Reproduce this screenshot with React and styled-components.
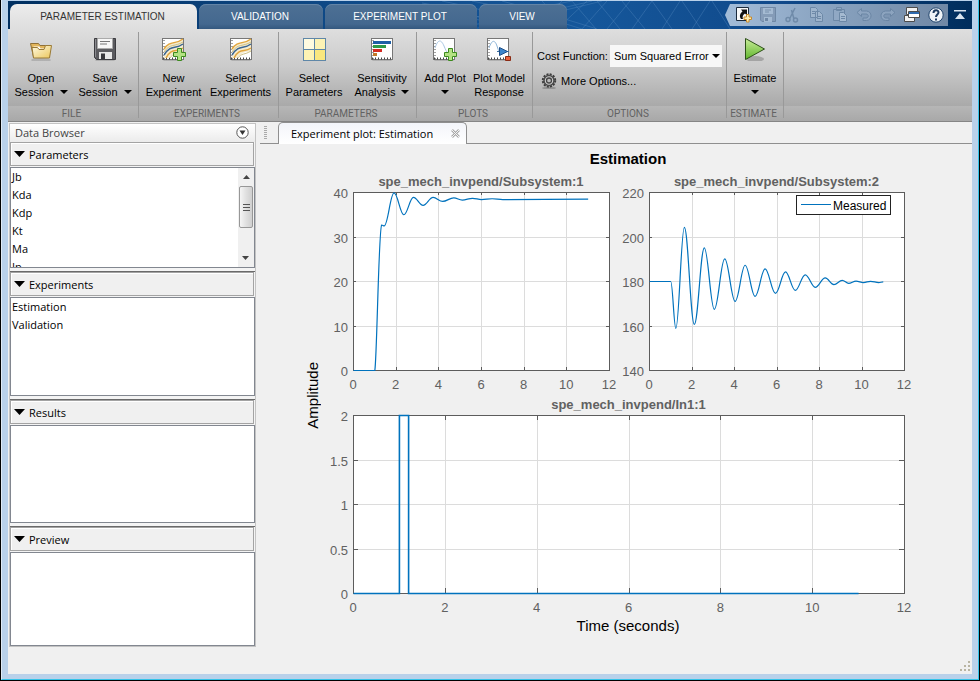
import React from "react";
import styled, { createGlobalStyle } from "styled-components";

const GlobalStyle = createGlobalStyle`
  * {
    box-sizing: border-box;
  }
  body {
    margin: 0;
    background: #000;
    font-family: "Liberation Sans", Arial, sans-serif;
    font-size: 11px;
    color: #000;
  }
  button {
    margin: 0;
    padding: 0;
    border: 0;
    background: none;
    font: inherit;
    color: inherit;
  }
  svg {
    display: block;
  }
`;

//data
const angleCurve = [
  [1, 180],
  [1.24, 158.9],
  [1.64, 204.3],
  [2.11, 160.7],
  [2.58, 195.1],
  [3.05, 167.5],
  [3.54, 190.2],
  [4.03, 171.1],
  [4.5, 187.3],
  [4.97, 173.3],
  [5.44, 185.7],
  [5.93, 174.7],
  [6.4, 184.3],
  [6.86, 176],
  [7.33, 183],
  [7.8, 177.4],
  [8.27, 181.6],
  [8.68, 178.6],
  [9.07, 180.5],
  [9.37, 179.2],
  [9.72, 180.2],
  [10.07, 179.5],
  [10.4, 180.1],
  [10.79, 179.5],
  [11, 179.8],
];

const positionCurve = [
  [1.32, 32.7],
  [1.44, 32.5],
  [1.9, 39.9],
  [2.36, 35],
  [2.81, 38.9],
  [3.26, 37.1],
  [3.73, 38.9],
  [4.18, 38],
  [4.7, 38.8],
  [5.1, 38.3],
  [5.58, 38.7],
  [6, 38.4],
  [6.5, 38.6],
  [7, 38.4],
  [11, 38.5],
];

const steps = (min, max, step) => {
  const out = [];
  for (let v = min; v <= max + step / 10; v += step) out.push(v);
  return out;
};

//chart
const Chart = ({ title, width, right, min, max, step, tick, legend, stroke = 1.2, draw }) => {
  const left = 28;
  const top = 20;
  const bottom = 198;
  const x = (v) => left + ((right - left) * v) / 12;
  const y = (v) => bottom - ((bottom - top) * (v - min)) / (max - min);
  const px = (v) => Math.round(v) + 0.5;
  const xs = steps(0, 12, 2);
  const ys = steps(min, max, step);

  return (
    <StyledChart viewBox={`0 0 ${width} 223`} role="img" aria-label={title}>
      <rect x={left} y={top} width={right - left} height={bottom - top} fill="#fff" />
      <g stroke="#dcdcdc">
        {xs.map((v) => (
          <line key={v} x1={px(x(v))} x2={px(x(v))} y1={top} y2={bottom} />
        ))}
        {ys.map((v) => (
          <line key={v} x1={left} x2={right} y1={px(y(v))} y2={px(y(v))} />
        ))}
      </g>
      <g stroke="#5c5c5c" fill="none">
        {xs.map((v) => (
          <path
            key={v}
            d={`M${px(x(v))} ${top}v${tick}M${px(x(v))} ${bottom}v-${tick}`}
          />
        ))}
        {ys.map((v) => (
          <path
            key={v}
            d={`M${left} ${px(y(v))}h${tick}M${right} ${px(y(v))}h-${tick}`}
          />
        ))}
        <rect
          x={left + 0.5}
          y={top + 0.5}
          width={right - left}
          height={bottom - top}
        />
      </g>
      <path
        d={draw(x, y)}
        fill="none"
        stroke="#0072bd"
        strokeWidth={stroke}
        transform="translate(0.5 0.5)"
      />
      <ChartTitle x={(left + right) / 2} y="14">
        {title}
      </ChartTitle>
      {xs.map((v) => (
        <TickLabel key={v} x={x(v)} y="217" textAnchor="middle">
          {v}
        </TickLabel>
      ))}
      {ys.map((v) => (
        <TickLabel key={v} x={left - 5} y={Math.round(y(v)) + 6} textAnchor="end">
          {v}
        </TickLabel>
      ))}
      {legend && (
        <g>
          <rect x="175.5" y="23.5" width="94" height="19" fill="#fff" stroke="#222" />
          <path d="M180 32.5h30" stroke="#0072bd" />
          <LegendText x="212" y="38">
            {legend}
          </LegendText>
        </g>
      )}
    </StyledChart>
  );
};

const smooth = (points, x, y) => {
  let d = "";
  for (let i = 1; i < points.length; i++) {
    const [t0, v0] = points[i - 1];
    const [t1, v1] = points[i];
    const pull = (t1 - t0) * 0.38;
    d += `C${x(t0 + pull)} ${y(v0)} ${x(t1 - pull)} ${y(v1)} ${x(t1)} ${y(v1)}`;
  }
  return d;
};

const drawPosition = (x, y) =>
  `M${x(0)} ${y(0)}H${x(1)}C${x(1.1)} ${y(3)} ${x(1.18)} ${y(32)} ${x(1.32)} ${y(
    32.7
  )}${smooth(positionCurve, x, y)}`;

const drawAngle = (x, y) =>
  `M${x(0)} ${y(180)}H${x(1)}${smooth(angleCurve, x, y)}`;

const drawPulse = (x, y) =>
  `M${x(0)} ${y(0)}H${x(1)}V${y(2)}H${x(1.2)}V${y(0)}H${x(11)}`;

const StyledChart = styled.svg`
  width: 100%;
  height: auto;
  overflow: visible;
`;

const ChartTitle = styled.text`
  font-size: 13px;
  font-weight: bold;
  fill: #616161;
  text-anchor: middle;
`;

const TickLabel = styled.text`
  font-size: 13px;
  fill: #616161;
`;

const LegendText = styled.text`
  font-size: 12px;
  fill: #000;
`;

//icons
const Caret = () => (
  <svg width="8" height="4" viewBox="0 0 8 4">
    <path d="M0 0h8L4 4z" fill="#000" />
  </svg>
);

const Shadow = () => <ellipse cx="12" cy="23" rx="10" ry="2" fill="#000" opacity=".14" />;

const FolderIcon = () => (
  <svg width="24" height="24" viewBox="0 0 24 24">
    <defs>
      <linearGradient id="folder" x1="0" y1="0" x2="1" y2="1">
        <stop offset="0" stopColor="#fffbe4" />
        <stop offset="1" stopColor="#ecc75c" />
      </linearGradient>
    </defs>
    <Shadow />
    <path d="M1.500 6.500h8l1.500 2h9.500v11.500H4.500z" fill="#e3b65c" stroke="#8f7038" />
    <path d="M4.500 9.500h6l1 2h7v7h-13z" fill="#fff" />
    <path d="M3 10.500h5.500l1.500 2h5l1.500-4h6l-2 12.500h-16z" fill="url(#folder)" stroke="#9a7a36" />
  </svg>
);

const SaveIcon = () => (
  <svg width="24" height="24" viewBox="0 0 24 24">
    <Shadow />
    <path d="M1.500 1.500h21v21h-19l-2-2z" fill="#5b5b5f" stroke="#3c3c40" />
    <path d="M4.500 1.500h15v10h-15z" fill="#f7f7f7" stroke="#aaa" />
    <path d="M7 4.500h10M7 7h7" stroke="#777" />
    <path d="M6 15h13v7H6z" fill="#e8e8e8" />
    <path d="M8 16.500h4v5.500H8z" fill="#38383c" />
    <path d="M2.500 2v18" stroke="#8b8b90" />
  </svg>
);

const Paper = () => (
  <g>
    <Shadow />
    <rect x="1.500" y="1.500" width="21" height="21" fill="#fff" stroke="#777" />
    <path d="M3 3v19" stroke="#444" strokeDasharray="1 2" />
    <path d="M2 21.500h20" stroke="#444" strokeDasharray="1 2" strokeWidth="2" />
  </g>
);

const Plus = ({ x, y }) => (
  <path
    transform={`translate(${x} ${y})`}
    d="M4.500 .5h4v4h4v4h-4v4h-4v-4h-4v-4h4z"
    fill="#b4e283"
    stroke="#3c8a1e"
  />
);

const Waves = () => (
  <g fill="none">
    <path d="M3 12C8 4 14 8 22 2v13c-7-1-10 2-14 6H3z" fill="#f5ecd0" />
    <path d="M3 12C9 3 14 8 22 2M5 21C11 10 15 16 22 11" stroke="#e2a53c" strokeWidth="1.500" />
    <path d="M3 18C10 7 14 13 22 7" stroke="#3a6592" strokeWidth="1.500" />
    <path d="M3 15C9 6 14 10 22 5M9 21C12 16 16 18 22 14" stroke="#cdbf86" />
  </g>
);

const SelectExperimentsIcon = () => (
  <svg width="24" height="24" viewBox="0 0 24 24">
    <Paper />
    <Waves />
  </svg>
);

const NewExperimentIcon = () => (
  <svg width="28" height="24" viewBox="-1 0 28 24">
    <Paper />
    <Waves />
    <Plus x="12" y="11" />
  </svg>
);

const ParametersIcon = () => (
  <svg width="24" height="24" viewBox="0 0 24 24">
    <Shadow />
    <path d="M1 1h23v23H1z" fill="#5f87a8" />
    <path d="M2 2h10v10H2z" fill="#fffbe0" />
    <path d="M13 2h10v10H13zM2 13h10v10H2z" fill="#fdf3b4" />
    <path d="M13 13h10v10H13z" fill="#f9e77e" />
  </svg>
);

const SensitivityIcon = () => (
  <svg width="24" height="24" viewBox="0 0 24 24">
    <Paper />
    <path d="M3 4h18v3H3z" fill="#1f5fa6" />
    <path d="M3 8h13v3H3z" fill="#2f9a47" />
    <path d="M3 12h9v3H3z" fill="#d42c23" />
    <path d="M3 16h4v3H3z" fill="#c27a2a" />
  </svg>
);

const AddPlotIcon = () => (
  <svg width="26" height="24" viewBox="0 0 26 24">
    <Paper />
    <path d="M3 11C6 2 9 2 12 9s4 9 10 9" fill="none" stroke="#a9c7e3" />
    <Plus x="12" y="11" />
  </svg>
);

const PlotModelIcon = () => (
  <svg width="26" height="24" viewBox="0 0 26 24">
    <Paper />
    <path d="M3 11C6 2 9 3 11 9s2 6 4 6" fill="none" stroke="#8db4d8" />
    <path d="M11 14.500h12" stroke="#3d6f9f" />
    <path d="M13.500 10.500v8l8-4z" fill="#3d86cc" stroke="#1e4f88" />
    <path d="M19.500 19.500h5v4h-5z" fill="#e8603a" stroke="#8a2b14" />
  </svg>
);

const PlayIcon = () => (
  <svg width="24" height="24" viewBox="0 0 24 24">
    <defs>
      <linearGradient id="play" x1="0" y1="0" x2="0" y2="1">
        <stop offset="0" stopColor="#c9ec9a" />
        <stop offset="1" stopColor="#5fb52c" />
      </linearGradient>
    </defs>
    <ellipse cx="12" cy="22" rx="9" ry="3" fill="#000" opacity=".2" />
    <path d="M2.500 1.500v21l19-10.500z" fill="url(#play)" stroke="#2c4f18" />
  </svg>
);

const GearIcon = () => (
  <svg width="16" height="16" viewBox="0 0 16 16">
    <ellipse cx="8" cy="15" rx="7" ry="1.500" fill="#000" opacity=".2" />
    <circle cx="8" cy="7.500" r="6.200" fill="none" stroke="#3d3d3d" strokeWidth="2" strokeDasharray="2 1.240" />
    <circle cx="8" cy="7.500" r="5" fill="#cfcfcf" stroke="#4a4a4a" strokeWidth="1.500" />
    <circle cx="8" cy="7.500" r="2.500" fill="#bbb" stroke="#444" strokeWidth="1.300" />
  </svg>
);

const ShortcutIcon = () => (
  <svg width="16" height="16" viewBox="0 0 16 16">
    <path d="M.5 .5h12v13H.5z" fill="#f8f8f8" stroke="#1b2a3c" />
    <path d="M5 2.500h6v6L9 6.500c-2 1-3 3-2 5.500H5C3 9 4 6.500 6.500 4.500z" fill="#111" />
    <path d="M10.500 7.500h2.500V10h2.500v2.500H13V15h-2.500v-2.500H8V10h2.500z" fill="#ffedb0" stroke="#c88a2a" />
  </svg>
);

const SmallSaveIcon = () => (
  <svg width="16" height="16" viewBox="0 0 16 16">
    <path d="M.5 .5h15v14H2l-1.500-1.500z" fill="#7f95b0" stroke="#637b98" />
    <path d="M3 1h10v6H3zM4 10h8v5H4z" fill="#a9bed4" />
    <path d="M5 3h6M5 5h4" stroke="#6f86a2" />
    <path d="M5 11h3v3H5z" fill="#637b98" />
  </svg>
);

const CutIcon = () => (
  <svg width="16" height="16" viewBox="0 0 16 16" fill="none" stroke="#64809f">
    <path d="M11 1L6 11M7.500 3l2.500 9" strokeWidth="1.500" />
    <circle cx="4" cy="12.500" r="2" strokeWidth="1.500" />
    <circle cx="11.500" cy="13" r="2" strokeWidth="1.500" />
  </svg>
);

const CopyIcon = () => (
  <svg width="16" height="16" viewBox="0 0 16 16" fill="#a5bad1" stroke="#64809f">
    <path d="M2.500 .5h5l2 2v8h-7zM7.500 4.500h4l3 3v7h-7z" />
    <path d="M4 4.500h3M4 6.500h3M9 9.500h4M9 11.500h4" />
  </svg>
);

const PasteIcon = () => (
  <svg width="16" height="16" viewBox="0 0 16 16" fill="#93abc6" stroke="#64809f">
    <path d="M1.500 2.500h11v11h-11zM4.500 .5h5v3h-5z" />
    <path d="M7.500 5.500h4l3 3v6h-7z" fill="#b0c3d8" />
    <path d="M9 9.500h4M9 11.500h4" />
  </svg>
);

const UndoIcon = () => (
  <svg width="16" height="16" viewBox="0 0 16 16">
    <path
      d="M5.500 1.500L1 5.500l4.500 4V7H10c3 0 3 4 0 4H7v2.500h3.500c6-.5 6-9 0-9.500h-5z"
      fill="#92a9c4"
      stroke="#64809f"
    />
  </svg>
);

const RedoIcon = () => (
  <svg width="16" height="16" viewBox="0 0 16 16">
    <path
      d="M10.500 1.500l4.500 4-4.500 4V7H6c-3 0-3 4 0 4h3v2.500H5.500c-6-.5-6-9 0-9.500h5z"
      fill="#92a9c4"
      stroke="#64809f"
    />
  </svg>
);

const WindowsIcon = () => (
  <svg width="16" height="16" viewBox="0 0 16 16" fill="#f2f2f2" stroke="#4c4c4c">
    <path d="M2.500 .5h11v7h-11z" />
    <path d="M.5 8.500h10v6H.5z" />
    <path d="M4.500 4.500h11v6h-11z" fill="#fff" />
    <path d="M5 6h10" stroke="#2f6bb0" strokeWidth="2" />
  </svg>
);

const HelpIcon = () => (
  <svg width="16" height="16" viewBox="0 0 16 16">
    <circle cx="8" cy="8" r="7.200" fill="#eef3f8" stroke="#24476e" />
    <path
      d="M5.500 6c0-3.500 5-3.500 5-.5 0 2-2.500 2-2.500 4.500"
      fill="none"
      stroke="#1d3a5e"
      strokeWidth="2"
    />
    <path d="M7 11.500h2v2H7z" fill="#1d3a5e" />
  </svg>
);

const CollapseIcon = () => (
  <svg width="12" height="12" viewBox="0 0 12 12">
    <path d="M0 1h12v1.500H0zM6 4l5 6H1z" fill="#d9e4ef" />
  </svg>
);

const MeshLines = () => (
  <StyledMesh viewBox="0 0 700 28" preserveAspectRatio="xMaxYMid slice">
    <g fill="none" stroke="#5b8fc4" strokeOpacity=".35">
      <path d="M300 2C340 8 370 22 400 28M300 10c40 4 70 12 100 18M320 0c40 8 80 20 110 28M350 0c30 6 80 18 110 28M380 0c30 8 70 20 95 28M300 20c60-2 110-12 150-20M320 28c50-6 110-18 150-28M350 28c50-8 90-18 130-28" />
      <path d="M410 28l30-28M435 28l30-28M460 28l25-28M485 28l23-28M510 28l20-28M540 28l18-28M570 28l18-28M420 0l26 28M450 0l24 28M475 0l23 28M500 0l23 28M530 0l20 28M560 0l19 28M590 0l18 28" />
    </g>
  </StyledMesh>
);

const StyledMesh = styled.svg`
  position: absolute;
  top: 0;
  right: 150px;
  width: 700px;
  height: 28px;
`;

//toolstrip
const ToolButton = ({ icon, lines, caret, width }) => (
  <StyledToolButton type="button" $width={width}>
    {icon}
    <ToolText>
      <span>{lines[0]}</span>
      <span>
        {lines[1]}
        {caret && <Caret />}
      </span>
    </ToolText>
  </StyledToolButton>
);

const StyledToolButton = styled.button`
  width: ${(p) => p.$width}px;
  display: flex;
  flex-direction: column;
  align-items: center;
  gap: 10px;
`;

const ToolText = styled.span`
  display: flex;
  flex-direction: column;
  line-height: 14px;
  white-space: nowrap;

  span {
    display: flex;
    justify-content: center;
    align-items: center;
    gap: 6px;
    min-height: 14px;
  }
`;

const Toolstrip = styled.div`
  display: flex;
  height: 93px;
  border-bottom: 1px solid #858585;
  background: linear-gradient(#dedede, #cbcbcb 40%, #a9a9a9 84%, #b6b6b6 84%, #a8a8a8);
`;

const Group = styled.section`
  position: relative;
  flex: none;
  min-width: ${(p) => p.$width}px;
  display: flex;
  flex-direction: column;

  &::after {
    content: "";
    position: absolute;
    top: 3px;
    bottom: 3px;
    right: 0;
    width: 1px;
    background: #999;
  }
`;

const GroupBody = styled.div`
  flex: 1;
  display: flex;
  padding: 8px 1px 0;
`;

const OptionsBody = styled.div`
  flex: 1;
  display: flex;
  flex-direction: column;
  gap: 3px;
  padding: 16px 5px 0 4px;
`;

const GroupName = styled.h2`
  margin: 0;
  height: 14px;
  padding-right: 4px;
  font: 10px/14px Roboto, "Liberation Sans", sans-serif;
  color: #626262;
  text-align: center;
`;

const CostRow = styled.div`
  display: flex;
  align-items: center;
  justify-content: space-between;
`;

const SelectWrap = styled.div`
  position: relative;
  display: flex;
  align-items: center;
  width: 112px;

  svg {
    position: absolute;
    right: 2px;
    pointer-events: none;
  }
`;

const CostSelect = styled.select`
  width: 100%;
  height: 22px;
  padding: 0 12px 0 4px;
  border: 0;
  border-radius: 0;
  background: #f7f7f7;
  appearance: none;
  font: inherit;
  color: #000;
`;

const MoreOptions = styled.button`
  display: flex;
  align-items: center;
  gap: 4px;
  height: 22px;
  padding-left: 4px;
`;

//title bar
const TitleBar = styled.header`
  position: relative;
  display: flex;
  justify-content: space-between;
  align-items: flex-start;
  height: 28px;
  padding-top: 3px;
  overflow: hidden;
  background: linear-gradient(90deg, #002f60, #0f4a88 35%, #15579b 60%, #10498a 80%, #002d5c);
`;

const Tabs = styled.nav`
  position: relative;
  display: flex;
  gap: 2px;
  padding-left: 2px;
`;

const Tab = styled.button`
  width: ${(p) => p.$width}px;
  height: 25px;
  padding-right: 2px;
  border-radius: 7px 7px 0 0;
  font-size: 10px;
  color: ${(p) => (p.$active ? "#333" : "#fff")};
  background: ${(p) =>
    p.$active
      ? "linear-gradient(#ececec, #dedede)"
      : "linear-gradient(#4d7094, #44688f 80%, #34587f)"};
  box-shadow: ${(p) => (p.$active ? "none" : "inset 0 1px 0 #6384a6")};
`;

const QuickAccess = styled.div`
  position: relative;
  display: flex;
  align-items: center;
`;

const QuickTools = styled.div`
  display: flex;
  height: 22px;
  padding-left: 7px;
  background: linear-gradient(90deg, #a3bcd8, #8ca6c3 40%, #7088a5);
  clip-path: polygon(0 50%, 5px 0, 100% 0, 100% 100%, 5px 100%);
`;

const QuickButton = styled.button`
  width: 24px;
  height: 22px;
  display: flex;
  align-items: center;
  justify-content: center;

  &:disabled {
    opacity: 0.75;
  }
`;

//data browser
const Browser = styled.aside`
  flex: none;
  align-self: flex-start;
  width: 247px;
  margin: 1px 4px 0 1px;
  border: 1px solid #c3c3c3;
  background: #f4f4f4;
  font-family: "Open Sans", "Noto Sans", sans-serif;
`;

const BrowserHeader = styled.div`
  display: flex;
  justify-content: space-between;
  align-items: center;
  height: 18px;
  padding: 0 6px 2px 5px;
  background: linear-gradient(#fff, #ebebeb);
  color: #444;
`;

const Panel = styled.section`
  & + & {
    margin-top: 3px;
    border-top: 1px solid #6a6a6a;
  }
`;

const PanelHeader = styled.button`
  display: flex;
  align-items: center;
  gap: 3px;
  width: 244px;
  height: 24px;
  margin-bottom: 1px;
  padding-left: 3px;
  border: 1px solid #a3a3a3;
  box-shadow: inset 1px 1px 0 #fff;
  background: #f0f0f0;
`;

const PanelBox = styled.div`
  display: flex;
  height: ${(p) => p.$height}px;
  border: 1px solid #828790;
  background: #fff;
  overflow: hidden;
`;

const List = styled.ul`
  flex: 1;
  margin: 0;
  padding: 0 1px;
  list-style: none;
  line-height: 18px;
`;

const ScrollBar = styled.div`
  display: flex;
  flex-direction: column;
  align-items: center;
  width: 16px;
  background: #f0f0f0;
`;

const ScrollArrow = styled.button`
  display: flex;
  align-items: center;
  justify-content: center;
  width: 16px;
  height: 18px;
  transform: ${(p) => (p.$down ? "rotate(180deg)" : "none")};
`;

const ScrollThumb = styled.div`
  display: flex;
  flex-direction: column;
  align-items: center;
  justify-content: center;
  gap: 2px;
  width: 14px;
  height: 42px;
  margin-bottom: auto;
  border: 1px solid #979797;
  border-radius: 2px;
  background: linear-gradient(90deg, #f5f5f5, #e0e0e0 50%, #cfcfcf);

  i {
    width: 7px;
    height: 1px;
    background: #555;
  }
`;

const DataPanel = ({ name, items, height, scroll }) => (
  <Panel>
    <PanelHeader type="button" aria-expanded="true">
      <svg width="12" height="6" viewBox="0 0 12 6">
        <path d="M0 0h11L5.500 6z" fill="#000" />
      </svg>
      {name}
    </PanelHeader>
    <PanelBox $height={height}>
      <List>
        {items.map((item) => (
          <li key={item}>{item}</li>
        ))}
      </List>
      {scroll && (
        <ScrollBar>
          <ScrollArrow type="button" aria-label="Scroll up">
            <svg width="7" height="4" viewBox="0 0 7 4">
              <path d="M0 4h7L3.500 0z" fill="#444" />
            </svg>
          </ScrollArrow>
          <ScrollThumb>
            <i />
            <i />
            <i />
          </ScrollThumb>
          <ScrollArrow type="button" aria-label="Scroll down" $down>
            <svg width="7" height="4" viewBox="0 0 7 4">
              <path d="M0 4h7L3.500 0z" fill="#444" />
            </svg>
          </ScrollArrow>
        </ScrollBar>
      )}
    </PanelBox>
  </Panel>
);

//document
const Document = styled.main`
  flex: 1;
  min-width: 0;
  display: flex;
  flex-direction: column;
`;

const DocumentTabs = styled.div`
  display: flex;
  height: 22px;
  font-family: "Open Sans", "Noto Sans", sans-serif;
`;

const TabLine = styled.div`
  flex: ${(p) => (p.$grow ? 1 : "none")};
  width: 18px;
  padding: 4px 0 0 4px;
  border-bottom: 1px solid #8f8f8f;
`;

const DocumentTab = styled.div`
  display: flex;
  align-items: center;
  justify-content: space-between;
  width: 189px;
  padding: 0 6px 1px 12px;
  border: 1px solid #8f8f8f;
  border-bottom: 0;
  border-radius: 5px 5px 0 0;
  background: linear-gradient(#f3f5fa, #fff);
`;

const Figure = styled.div`
  display: grid;
  grid-template-columns: 41px 24px 1fr 1fr;
  padding: 6px 55px 0 0;
`;

const FigureTitle = styled.h1`
  grid-column: 3 / 5;
  margin: 0 0 4px;
  padding-left: 14px;
  font-size: 15px;
  line-height: 18px;
  text-align: center;
`;

const YLabel = styled.div`
  grid-column: 2;
  grid-row: 2 / 4;
  justify-self: center;
  align-self: center;
  writing-mode: vertical-rl;
  transform: rotate(180deg);
  font-size: 15px;
  line-height: 24px;
`;

const Cell = styled.div`
  grid-column: ${(p) => p.$column};
`;

const XLabel = styled.div`
  grid-column: 3 / 5;
  padding-left: 14px;
  font-size: 15px;
  line-height: 16px;
  text-align: center;
`;

const ResizeGrip = styled.svg`
  align-self: flex-end;
  margin: auto 1px 2px 0;
`;

//window
const Frame = styled.div`
  display: flex;
  min-height: 100vh;
  padding: 0 1px 1px;
  background: #000;
`;

const Border = styled.div`
  flex: 1;
  min-width: 0;
  display: flex;
  padding: 1px 6px 5px;
  border: solid #35c3e8;
  border-width: 0 1px 1px 0;
  border-left: 1px solid #dfeaf5;
  background: #b9d1ea;
`;

const Content = styled.div`
  flex: 1;
  min-width: 0;
  display: flex;
  flex-direction: column;
  background: #f0f0f0;
`;

const Workspace = styled.div`
  flex: 1;
  display: flex;
`;

const quickTools = [
  ["New shortcut", <ShortcutIcon />],
  ["Save", <SmallSaveIcon />, true],
  ["Cut", <CutIcon />, true],
  ["Copy", <CopyIcon />, true],
  ["Paste", <PasteIcon />, true],
  ["Undo", <UndoIcon />, true],
  ["Redo", <RedoIcon />, true],
  ["Switch windows", <WindowsIcon />],
  ["Help", <HelpIcon />],
];

const App = () => {
  return (
    <Frame>
      <GlobalStyle />
      <Border>
        <Content>
          <TitleBar>
            <MeshLines />
            <Tabs>
              <Tab type="button" $width={187} $active>
                PARAMETER ESTIMATION
              </Tab>
              <Tab type="button" $width={124}>
                VALIDATION
              </Tab>
              <Tab type="button" $width={152}>
                EXPERIMENT PLOT
              </Tab>
              <Tab type="button" $width={88}>
                VIEW
              </Tab>
            </Tabs>
            <QuickAccess>
              <QuickTools>
                {quickTools.map(([label, icon, off]) => (
                  <QuickButton key={label} type="button" aria-label={label} disabled={off}>
                    {icon}
                  </QuickButton>
                ))}
              </QuickTools>
              <QuickButton type="button" aria-label="Minimize toolstrip">
                <CollapseIcon />
              </QuickButton>
            </QuickAccess>
          </TitleBar>

          <Toolstrip>
            <Group $width={131}>
              <GroupBody>
                <ToolButton icon={<FolderIcon />} lines={["Open", "Session"]} caret width={64} />
                <ToolButton icon={<SaveIcon />} lines={["Save", "Session"]} caret width={64} />
              </GroupBody>
              <GroupName>FILE</GroupName>
            </Group>
            <Group $width={140}>
              <GroupBody>
                <ToolButton icon={<NewExperimentIcon />} lines={["New", "Experiment"]} width={67} />
                <ToolButton
                  icon={<SelectExperimentsIcon />}
                  lines={["Select", "Experiments"]}
                  width={67}
                />
              </GroupBody>
              <GroupName>EXPERIMENTS</GroupName>
            </Group>
            <Group $width={138}>
              <GroupBody>
                <ToolButton icon={<ParametersIcon />} lines={["Select", "Parameters"]} width={68} />
                <ToolButton
                  icon={<SensitivityIcon />}
                  lines={["Sensitivity", "Analysis"]}
                  caret
                  width={68}
                />
              </GroupBody>
              <GroupName>PARAMETERS</GroupName>
            </Group>
            <Group $width={116}>
              <GroupBody>
                <ToolButton icon={<AddPlotIcon />} lines={["Add Plot", ""]} caret width={54} />
                <ToolButton
                  icon={<PlotModelIcon />}
                  lines={["Plot Model", "Response"]}
                  width={54}
                />
              </GroupBody>
              <GroupName>PLOTS</GroupName>
            </Group>
            <Group $width={194}>
              <OptionsBody>
                <CostRow>
                  <label htmlFor="cost">Cost Function:</label>
                  <SelectWrap>
                    <CostSelect id="cost" defaultValue="sse">
                      <option value="sse">Sum Squared Error</option>
                    </CostSelect>
                    <Caret />
                  </SelectWrap>
                </CostRow>
                <MoreOptions type="button">
                  <GearIcon />
                  More Options...
                </MoreOptions>
              </OptionsBody>
              <GroupName>OPTIONS</GroupName>
            </Group>
            <Group $width={57}>
              <GroupBody>
                <ToolButton icon={<PlayIcon />} lines={["Estimate", ""]} caret width={54} />
              </GroupBody>
              <GroupName>ESTIMATE</GroupName>
            </Group>
          </Toolstrip>

          <Workspace>
            <Browser>
              <BrowserHeader>
                Data Browser
                <button type="button" aria-label="Data Browser menu">
                  <svg width="13" height="13" viewBox="0 0 13 13">
                    <circle cx="6.500" cy="6.500" r="5.700" fill="#fff" stroke="#555" />
                    <path d="M3.500 4.500h6l-3 4.500z" fill="#333" />
                  </svg>
                </button>
              </BrowserHeader>
              <DataPanel
                name="Parameters"
                items={["Jb", "Kda", "Kdp", "Kt", "Ma", "Ip"]}
                height={101}
                scroll
              />
              <DataPanel name="Experiments" items={["Estimation", "Validation"]} height={99} />
              <DataPanel name="Results" items={[]} height={98} />
              <DataPanel name="Preview" items={[]} height={94} />
            </Browser>

            <Document>
              <DocumentTabs>
                <TabLine>
                  <svg width="4" height="14" viewBox="0 0 4 14">
                    <path d="M1.500 0v14" stroke="#aaa" strokeWidth="3" strokeDasharray="1 1" />
                  </svg>
                </TabLine>
                <DocumentTab>
                  Experiment plot: Estimation
                  <button type="button" aria-label="Close tab">
                    <svg width="9" height="9" viewBox="0 0 9 9">
                      <path d="M1 1l7 7M8 1L1 8" stroke="#a8a8a8" strokeWidth="2.500" />
                      <path d="M1 1l7 7M8 1L1 8" stroke="#f4f4f4" strokeWidth="1" />
                    </svg>
                  </button>
                </DocumentTab>
                <TabLine $grow />
              </DocumentTabs>
              <Figure>
                <FigureTitle>Estimation</FigureTitle>
                <YLabel>Amplitude</YLabel>
                <Cell $column="3">
                  <Chart
                    title="spe_mech_invpend/Subsystem:1"
                    width={296}
                    right={284}
                    min={0}
                    max={40}
                    step={10}
                    tick={3}
                    draw={drawPosition}
                  />
                </Cell>
                <Cell $column="4">
                  <Chart
                    title="spe_mech_invpend/Subsystem:2"
                    width={296}
                    right={283}
                    min={140}
                    max={220}
                    step={20}
                    tick={3}
                    legend="Measured"
                    draw={drawAngle}
                  />
                </Cell>
                <Cell $column="3 / 5">
                  <Chart
                    title="spe_mech_invpend/In1:1"
                    width={592}
                    right={579}
                    min={0}
                    max={2}
                    step={0.5}
                    tick={5}
                    stroke={1.6}
                    draw={drawPulse}
                  />
                </Cell>
                <XLabel>Time (seconds)</XLabel>
              </Figure>
              <ResizeGrip width="11" height="11" viewBox="0 0 11 11" fill="#b8b4a2">
                <path d="M8 0h2v2H8zM8 4h2v2H8zM4 4h2v2H4zM8 8h2v2H8zM4 8h2v2H4zM0 8h2v2H0z" />
              </ResizeGrip>
            </Document>
          </Workspace>
        </Content>
      </Border>
    </Frame>
  );
};

export default App;
